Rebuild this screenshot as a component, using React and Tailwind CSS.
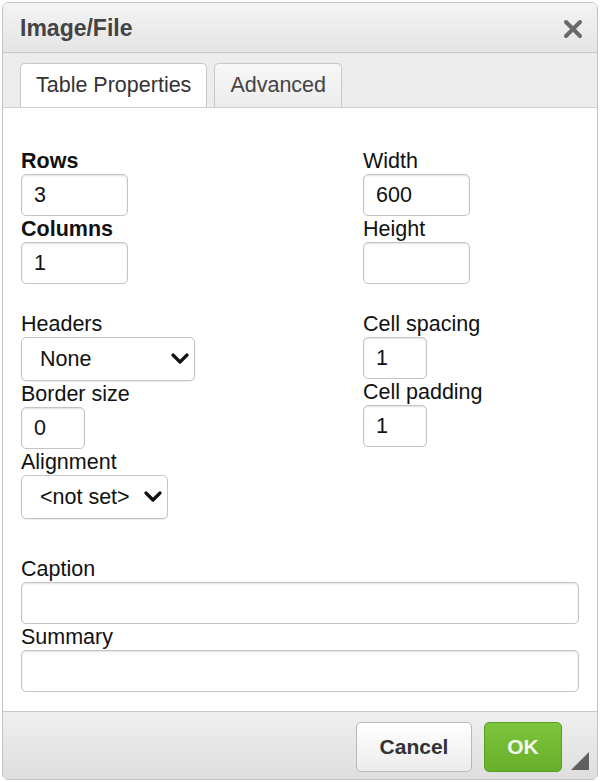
import React, { useState } from "react";

const Chevron = () => (
  <svg width="18" height="12" viewBox="0 0 18 12" className="pointer-events-none">
    <polyline points="2,2 9,9 16,2" fill="none" stroke="#111" strokeWidth="3.2" strokeLinecap="round" strokeLinejoin="round" />
  </svg>
);

const Label = ({ children, bold, className = "" }) => (
  <div className={`h-[26px] leading-[26px] text-[21.5px] text-[#111] ${bold ? "font-bold" : ""} ${className}`}>
    {children}
  </div>
);

const Field = ({ value, width, height = "h-[42px]", onChange }) => (
  <input
    type="text"
    value={value}
    onChange={onChange}
    className={`${width} ${height} block bg-white border border-[#c4c4c4] rounded-[5px] shadow-[inset_0_1px_2px_rgba(0,0,0,0.12)] px-[12px] text-[21.5px] text-[#111] outline-none`}
  />
);

const Select = ({ value, width, options, onChange }) => (
  <div className={`relative ${width} h-[44px]`}>
    <select
      value={value}
      onChange={onChange}
      className="appearance-none w-full h-full bg-white border border-[#c4c4c4] rounded-[5px] shadow-[0_1px_1px_rgba(0,0,0,0.08)] pl-[18px] text-[21.5px] text-[#111] outline-none"
    >
      {options.map((o) => (
        <option key={o}>{o}</option>
      ))}
    </select>
    <div className="absolute right-[6px] top-[16px]">
      <Chevron />
    </div>
  </div>
);

const App = () => {
  const [tab, setTab] = useState("props");
  const [data, setData] = useState({
    rows: "3",
    cols: "1",
    width: "600",
    height: "",
    headers: "None",
    border: "0",
    align: "<not set>",
    spacing: "1",
    padding: "1",
    caption: "",
    summary: "",
  });

  const set = (name) => (e) => setData({ ...data, [name]: e.target.value });

  return (
    <div className="w-[600px] h-[782px] bg-white p-[2px] font-['Liberation_Sans',Arial,sans-serif]">
      <div className="relative w-[596px] h-[778px] border border-[#c3c3c3] rounded-[6px] overflow-hidden flex flex-col bg-white">
        {/* title bar */}
        <div className="h-[50px] shrink-0 flex items-center justify-between pl-[17px] pr-[14px] pt-[2px] bg-gradient-to-b from-[#f4f4f4] to-[#e4e4e4] border-b border-[#c6c6c6]">
          <span className="text-[23px] font-bold text-[#444]">Image/File</span>
          <svg width="20" height="20" viewBox="0 0 20 20">
            <path d="M3 3 L17 17 M17 3 L3 17" stroke="#6a6a6a" strokeWidth="4" strokeLinecap="round" />
          </svg>
        </div>

        {/* tabs */}
        <div className="h-[55px] shrink-0 flex items-end gap-[7px] pl-[17px] bg-[#ececec] border-b border-[#cfcfcf]">
          <button
            onClick={() => setTab("props")}
            className={`h-[44px] px-[15px] rounded-t-[5px] border border-b-0 border-[#c8c8c8] text-[21.5px] text-[#333] ${tab === "props" ? "bg-white" : "bg-gradient-to-b from-[#f7f7f7] to-[#ececec]"}`}
          >
            Table Properties
          </button>
          <button
            onClick={() => setTab("adv")}
            className={`h-[44px] px-[15px] rounded-t-[5px] border border-b-0 border-[#c8c8c8] text-[21.5px] text-[#444] ${tab === "adv" ? "bg-white" : "bg-gradient-to-b from-[#f7f7f7] to-[#ececec]"}`}
          >
            Advanced
          </button>
        </div>

        {/* content */}
        <div className="flex-1 bg-white pl-[18px] pr-[18px] pt-[40px]">
          <div className="grid grid-cols-[342px_1fr]">
            <div>
              <Label bold>Rows</Label>
              <Field value={data.rows} onChange={set("rows")} width="w-[107px]" />
              <Label bold>Columns</Label>
              <Field value={data.cols} onChange={set("cols")} width="w-[107px]" />
            </div>
            <div>
              <Label>Width</Label>
              <Field value={data.width} onChange={set("width")} width="w-[107px]" />
              <Label>Height</Label>
              <Field value={data.height} onChange={set("height")} width="w-[107px]" />
            </div>
          </div>

          <div className="grid grid-cols-[342px_1fr] mt-[27px]">
            <div>
              <Label>Headers</Label>
              <Select value={data.headers} onChange={set("headers")} width="w-[174px]" options={["None", "First row", "First column", "Both"]} />
              <Label>Border size</Label>
              <Field value={data.border} onChange={set("border")} width="w-[64px]" />
              <Label>Alignment</Label>
              <Select value={data.align} onChange={set("align")} width="w-[147px]" options={["<not set>", "Left", "Center", "Right"]} />
            </div>
            <div>
              <Label>Cell spacing</Label>
              <Field value={data.spacing} onChange={set("spacing")} width="w-[64px]" />
              <Label>Cell padding</Label>
              <Field value={data.padding} onChange={set("padding")} width="w-[64px]" />
            </div>
          </div>

          <div className="mt-[37px]">
            <Label>Caption</Label>
            <Field value={data.caption} onChange={set("caption")} width="w-full" />
            <Label>Summary</Label>
            <Field value={data.summary} onChange={set("summary")} width="w-full" />
          </div>
        </div>

        {/* footer */}
        <div className="h-[68px] shrink-0 flex items-start justify-end gap-[12px] pt-[10px] pr-[35px] bg-gradient-to-b from-[#efefef] to-[#dedede] border-t border-[#c6c6c6]">
          <button className="w-[116px] h-[50px] rounded-[5px] border border-[#b8b8b8] bg-gradient-to-b from-[#ffffff] to-[#ececec] text-[21px] font-bold text-[#333]">
            Cancel
          </button>
          <button className="w-[78px] h-[50px] rounded-[5px] border border-[#5a9e22] bg-gradient-to-b from-[#7cc43b] to-[#68b02a] text-[21px] font-bold text-[#f4f8ee]">
            OK
          </button>
        </div>
        <svg width="18" height="18" viewBox="0 0 18 18" className="absolute right-[8px] bottom-[9px]">
          <polygon points="18,0 18,18 0,18" fill="#606060" />
        </svg>
      </div>
    </div>
  );
};

export default App;
